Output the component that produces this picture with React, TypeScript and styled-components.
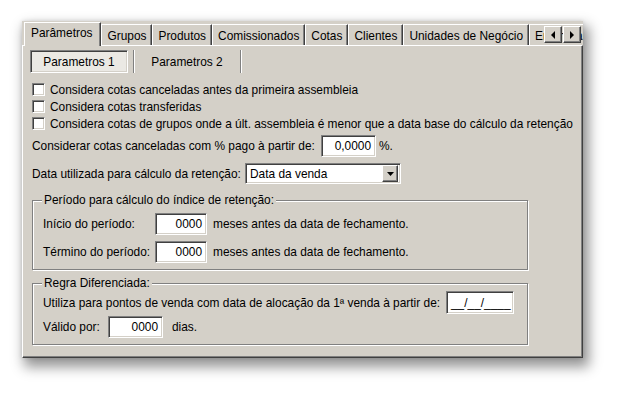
import React from "react";
import styled, { createGlobalStyle, css } from "styled-components";

const GlobalStyle = createGlobalStyle`
  html, body { margin: 0; padding: 0; background: #fff; }
  body {
    font-family: "Liberation Sans", Arial, sans-serif;
    font-size: 11.9px;
    color: #000;
  }
  * { box-sizing: border-box; }
`;

const FACE = "#d4d0c8";

const raised = css`
  border-top: 1px solid #fff;
  border-left: 1px solid #fff;
  border-right: 1px solid #404040;
  border-bottom: 1px solid #404040;
  box-shadow: inset -1px -1px 0 #808080;
`;

const sunken = css`
  border-top: 1px solid #808080;
  border-left: 1px solid #808080;
  border-right: 1px solid #fff;
  border-bottom: 1px solid #fff;
  box-shadow: inset 1px 1px 0 #404040, inset -1px -1px 0 ${FACE};
`;

const Stage = styled.div`
  width: 626px;
  height: 399px;
  padding: 21px 0 0 22px;
  background: #fff;
`;

const Window = styled.div`
  position: relative;
  width: 561px;
  height: 337px;
  background: ${FACE};
  display: flex;
  flex-direction: column;
  overflow: hidden;
  box-shadow: 4px 7px 12px 2px rgba(0, 0, 0, 0.42), 0 0 4px rgba(0, 0, 0, 0.12);
`;

const TabStrip = styled.div`
  flex: none;
  display: flex;
  align-items: flex-end;
  height: 24px;
  padding-left: 2px;
  white-space: nowrap;
`;

const Tab = styled.div<{ $active?: boolean }>`
  flex: none;
  position: relative;
  line-height: 14px;
  background: ${FACE};
  border-top: 1px solid #fff;
  border-left: 1px solid #fff;
  border-right: 1px solid #404040;
  box-shadow: inset -1px 0 0 #808080;
  ${(p) =>
    p.$active
      ? css`
          height: 24px;
          top: 1px;
          z-index: 2;
          padding: 3px 8px 0 6px;
        `
      : css`
          height: 21px;
          padding: 4px 5px 0 5px;
        `}
`;

const Scroller = styled.div`
  position: absolute;
  left: 522px;
  top: 5px;
  display: flex;
  z-index: 3;
`;

const ScrollButton = styled.div`
  width: 18px;
  height: 17px;
  background: ${FACE};
  display: flex;
  align-items: center;
  justify-content: center;
  ${raised}
  & + & { margin-left: 1px; }
`;

const Sheet = styled.div`
  flex: 1;
  display: flex;
  flex-direction: column;
  padding: 4px 0 0 9px;
  border-top: 1px solid #fff;
  border-left: 1px solid #fff;
  border-right: 1px solid #404040;
  border-bottom: 1px solid #404040;
  box-shadow: inset -1px -1px 0 #808080;
`;

const SubTabs = styled.div`
  display: flex;
  height: 23px;
  margin-left: -2px;
`;

const SubTab = styled.div<{ $active?: boolean; $w: number }>`
  width: ${(p) => p.$w}px;
  display: flex;
  align-items: center;
  justify-content: center;
  ${(p) =>
    p.$active &&
    css`
      background: #ebe9e4;
      ${sunken}
    `}
`;

const SubSep = styled.div<{ $ml: number }>`
  width: 2px;
  margin-left: ${(p) => p.$ml}px;
  border-left: 1px solid #808080;
  border-right: 1px solid #fff;
`;

const CheckList = styled.div`
  display: flex;
  flex-direction: column;
  margin-top: 8px;
`;

const CheckRow = styled.label`
  display: flex;
  align-items: center;
  gap: 5px;
  height: 17px;
  white-space: nowrap;
`;

const CheckBox = styled.span`
  flex: none;
  width: 13px;
  height: 13px;
  background: #fff;
  ${sunken}
`;

const Row = styled.div<{ $h: number; $mt: number }>`
  display: flex;
  align-items: center;
  height: ${(p) => p.$h}px;
  margin-top: ${(p) => p.$mt}px;
  white-space: nowrap;
`;

const Label = styled.span<{ $w?: number }>`
  flex: none;
  ${(p) => p.$w !== undefined && css`width: ${p.$w}px;`}
`;

const Suffix = styled.span<{ $ml: number }>`
  margin-left: ${(p) => p.$ml}px;
`;

const Edit = styled.div<{ $w: number; $h: number; $align?: "left" | "right" }>`
  flex: none;
  width: ${(p) => p.$w}px;
  height: ${(p) => p.$h}px;
  background: #fff;
  display: flex;
  align-items: center;
  justify-content: ${(p) => (p.$align === "left" ? "flex-start" : "flex-end")};
  padding: 0 4px;
  ${sunken}
`;

const Combo = styled.div`
  flex: none;
  width: 156px;
  height: 21px;
  background: #fff;
  display: flex;
  align-items: center;
  padding: 2px 2px 2px 4px;
  ${sunken}
`;

const ComboText = styled.span`
  flex: 1;
`;

const ComboButton = styled.div`
  width: 16px;
  height: 17px;
  background: ${FACE};
  display: flex;
  align-items: center;
  justify-content: center;
  ${raised}
`;

const Group = styled.fieldset<{ $mt: number; $pt: number; $pb: number }>`
  width: 496px;
  margin: ${(p) => p.$mt}px 0 0 0;
  padding: ${(p) => p.$pt}px 8px ${(p) => p.$pb}px 10px;
  border: 1px solid #808080;
  box-shadow: 1px 1px 0 #fff, inset 1px 1px 0 #fff;
  min-width: 0;
`;

const Legend = styled.legend`
  padding: 0 2px;
  margin-left: -1px;
  line-height: 14px;
  background: ${FACE};
`;

const DateMask = styled.span`
  letter-spacing: 0;
`;

const Arrow = ({ dir }: { dir: "left" | "right" | "down" }) => {
  const pts =
    dir === "left" ? "4,0 4,8 0,4" : dir === "right" ? "0,0 0,8 4,4" : "0,0 7,0 3.5,4";
  const w = dir === "down" ? 7 : 4;
  const h = dir === "down" ? 4 : 8;
  return (
    <svg width={w} height={h} viewBox={`0 0 ${w} ${h}`}>
      <polygon points={pts} fill="#000" />
    </svg>
  );
};

const tabs = [
  "Parâmetros",
  "Grupos",
  "Produtos",
  "Comissionados",
  "Cotas",
  "Clientes",
  "Unidades de Negócio",
  "Empresas",
];

const checks = [
  "Considera cotas canceladas antes da primeira assembleia",
  "Considera cotas transferidas",
  "Considera cotas de grupos onde a últ. assembleia é menor que a data base do cálculo da retenção",
];

export default function App() {
  return (
    <>
      <GlobalStyle />
      <Stage>
        <Window>
          <TabStrip>
            {tabs.map((t, i) => (
              <Tab key={t} $active={i === 0}>
                {t}
              </Tab>
            ))}
          </TabStrip>
          <Scroller>
            <ScrollButton>
              <Arrow dir="left" />
            </ScrollButton>
            <ScrollButton>
              <Arrow dir="right" />
            </ScrollButton>
          </Scroller>
          <Sheet>
            <SubTabs>
              <SubTab $active $w={98}>
                Parametros 1
              </SubTab>
              <SubSep $ml={5} />
              <SubTab $w={104}>Parametros 2</SubTab>
              <SubSep $ml={1} />
            </SubTabs>

            <CheckList>
              {checks.map((c) => (
                <CheckRow key={c}>
                  <CheckBox />
                  {c}
                </CheckRow>
              ))}
            </CheckList>

            <Row $h={22} $mt={3}>
              <Label $w={289}>Considerar cotas canceladas com % pago à partir de:</Label>
              <Edit $w={55} $h={22}>0,0000</Edit>
              <Suffix $ml={3}>%.</Suffix>
            </Row>

            <Row $h={21} $mt={6}>
              <Label $w={213}>Data utilizada para cálculo da retenção:</Label>
              <Combo>
                <ComboText>Data da venda</ComboText>
                <ComboButton>
                  <Arrow dir="down" />
                </ComboButton>
              </Combo>
            </Row>

            <Group $mt={9} $pt={6} $pb={6}>
              <Legend>Período para cálculo do índice de retenção:</Legend>
              <Row $h={22} $mt={0}>
                <Label $w={112}>Início do período:</Label>
                <Edit $w={52} $h={22}>0000</Edit>
                <Suffix $ml={6}>meses antes da data de fechamento.</Suffix>
              </Row>
              <Row $h={22} $mt={6}>
                <Label $w={112}>Término do período:</Label>
                <Edit $w={52} $h={22}>0000</Edit>
                <Suffix $ml={6}>meses antes da data de fechamento.</Suffix>
              </Row>
            </Group>

            <Group $mt={6} $pt={1} $pb={6}>
              <Legend>Regra Diferenciada:</Legend>
              <Row $h={23} $mt={0}>
                <Label $w={403}>
                  Utiliza para pontos de venda com data de alocação da 1ª venda à partir de:
                </Label>
                <Edit $w={68} $h={23} $align="left">
                  <DateMask>__/__/____</DateMask>
                </Edit>
              </Row>
              <Row $h={22} $mt={2}>
                <Label $w={65}>Válido por:</Label>
                <Edit $w={55} $h={22}>0000</Edit>
                <Suffix $ml={9}>dias.</Suffix>
              </Row>
            </Group>
          </Sheet>
        </Window>
      </Stage>
    </>
  );
}
